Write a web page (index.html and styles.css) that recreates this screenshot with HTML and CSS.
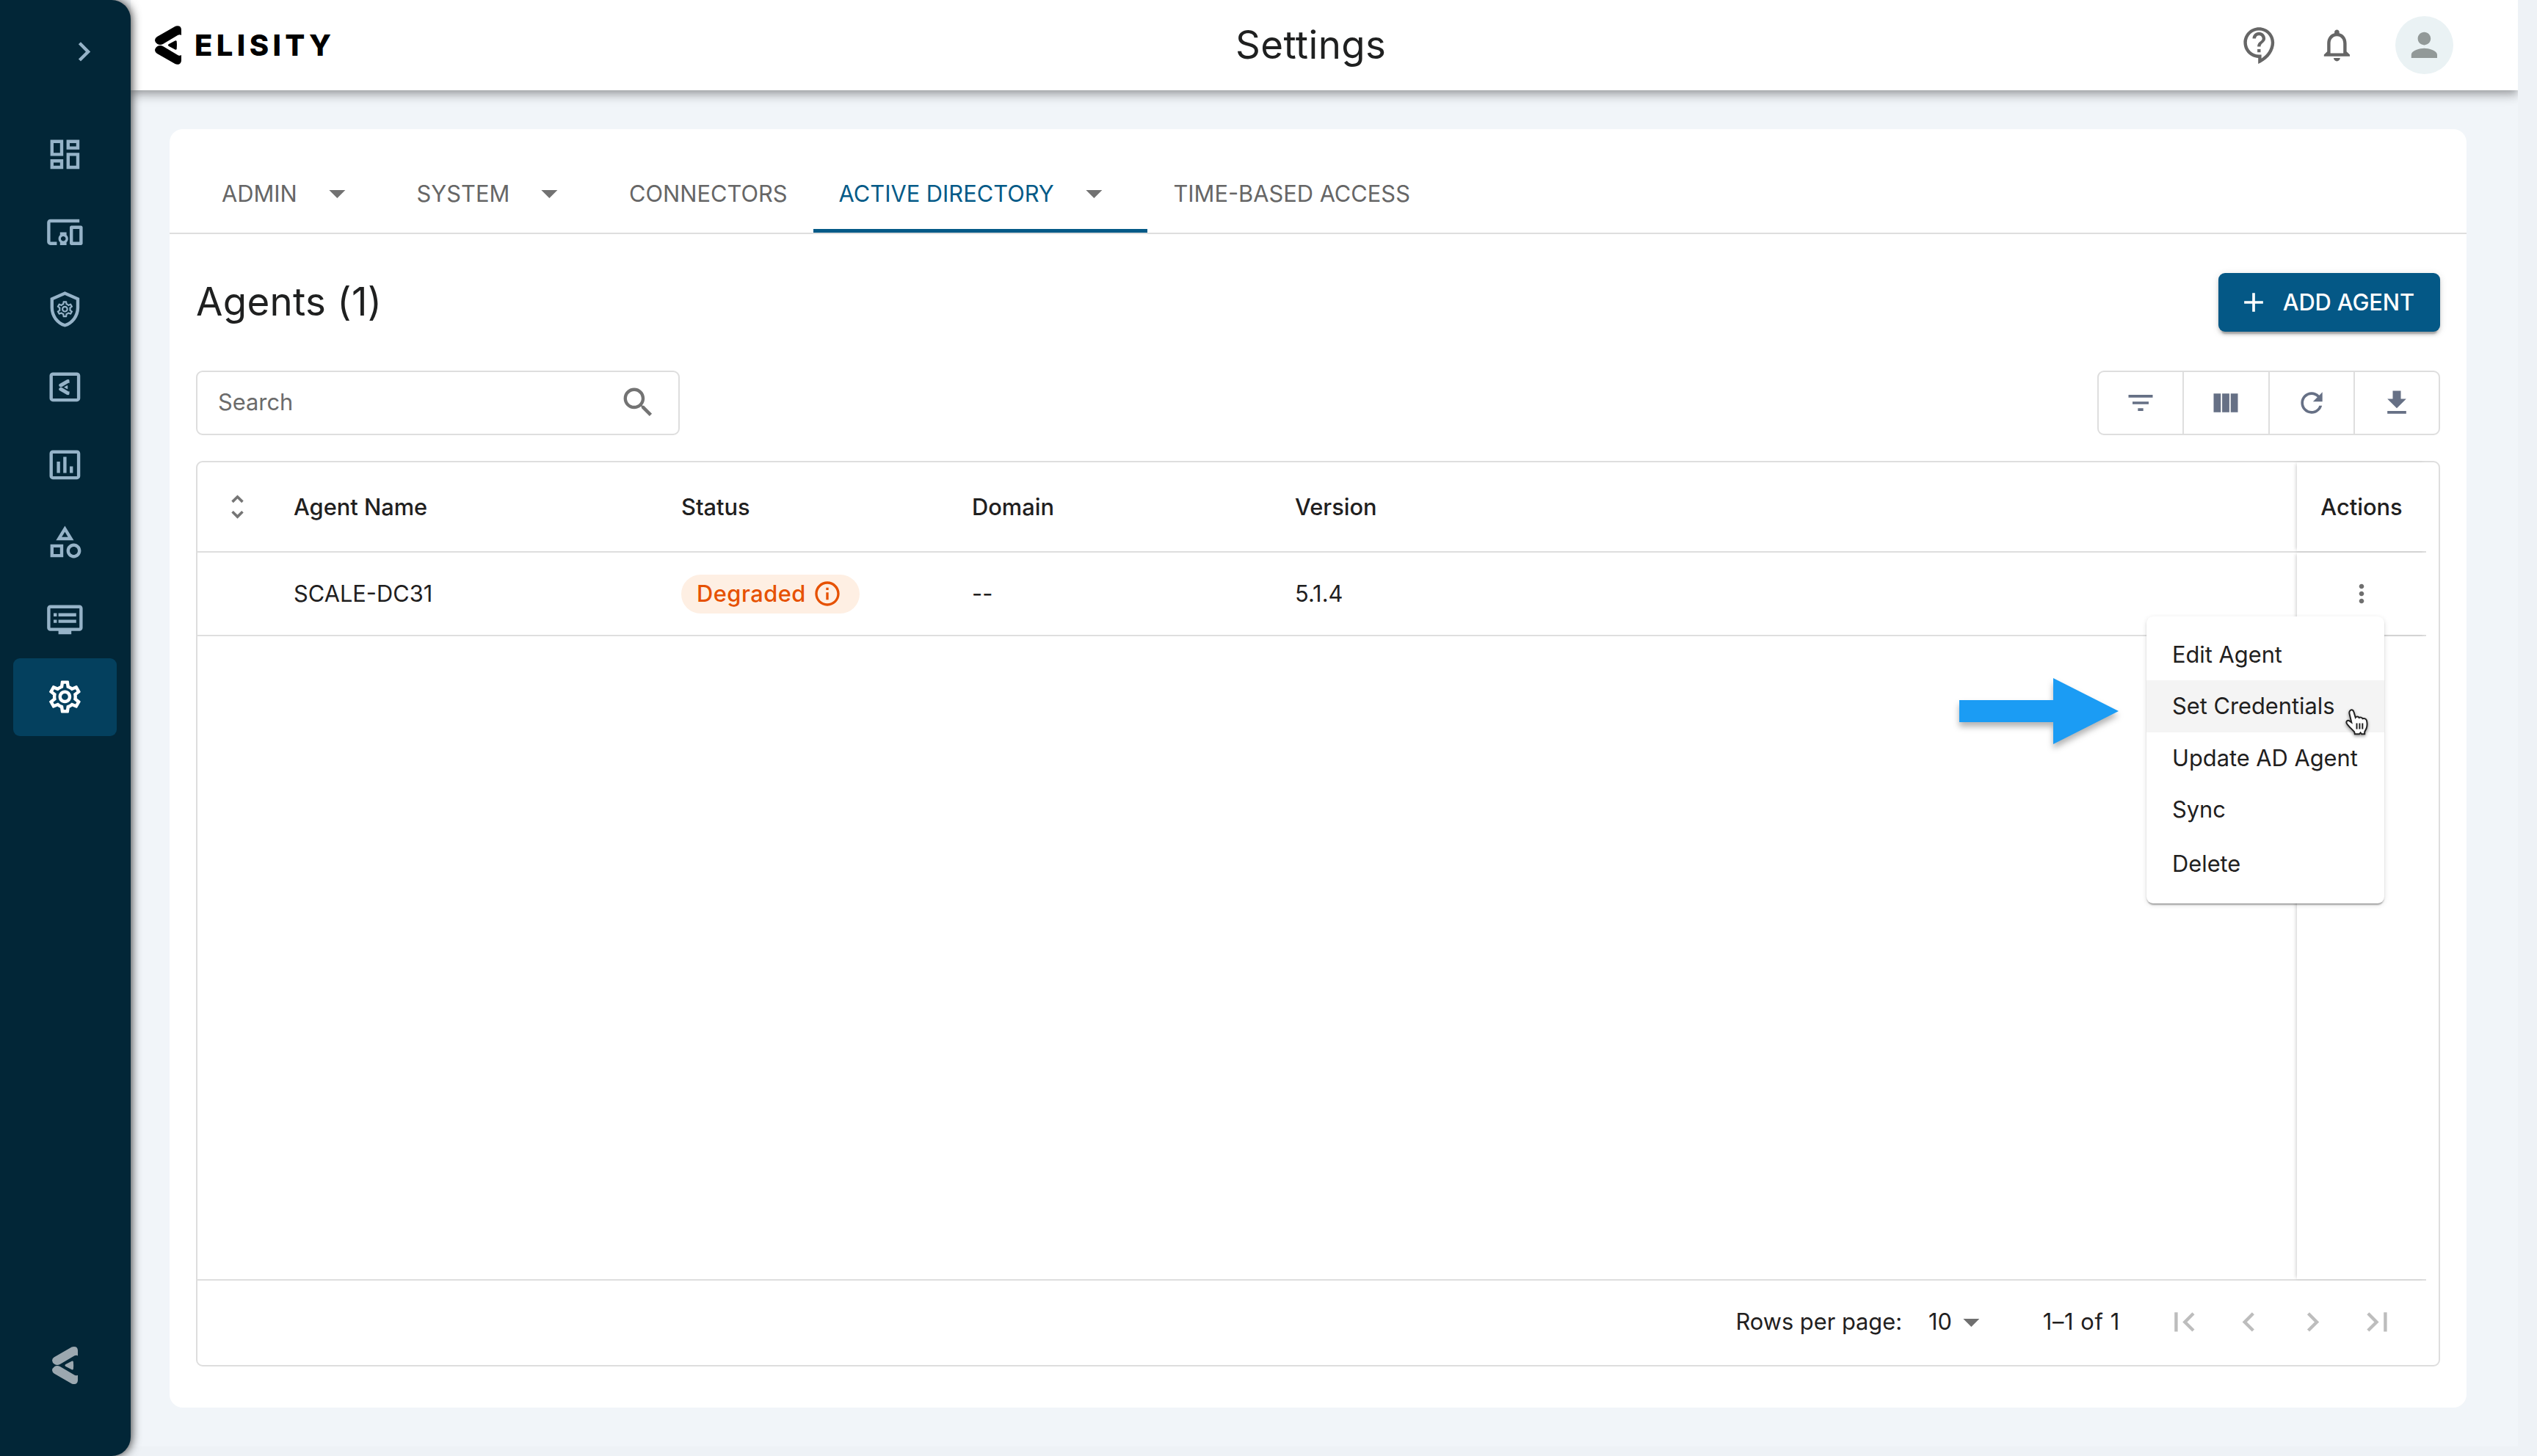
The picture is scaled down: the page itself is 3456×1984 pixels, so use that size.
FILE: index.html
```html
<!DOCTYPE html>
<html lang="en">
	<head>
		<meta charset="utf-8" />
		<title>Settings</title>
		<link rel="stylesheet" href="styles.css">
	</head>
	<body>
		<svg class="defs" width="0" height="0">
			<symbol id="mark" viewBox="0 0 36 53">
				<path d="M27.5.9Q30-.3 33 .6 36 2 36 6v7q-1.6-1.4-4.5-.2L11 25q-4 2-7.5 0Q0 22.5 0 19.500.3 16.500 3 15z" />
				<path d="M27.500 52.100q2.500 1.200 5.500.3 3-1.400 3-5.400v-7q-1.600 1.400-4.500.2L11 28q-4-2-7.500 0Q0 30.500 0 33.500.3 36.500 3 38z" />
				<path d="M18.600 25.300 27.500 20.500q1.700-.6 2.200.8.600 5.200 0 10.400-.5 1.400-2.200.8l-8.900-4.800q-1.500-1.200 0-2.400z" />
			</symbol>
			<symbol id="gear" viewBox="0 0 24 24">
				<path d="M19.430 12.980c.04-.32.07-.64.07-.98s-.03-.66-.07-.98l2.110-1.650c.19-.15.24-.42.12-.64l-2-3.460c-.09-.16-.26-.25-.44-.25-.06 0-.12.01-.17.03l-2.490 1c-.52-.4-1.080-.73-1.690-.98l-.38-2.650C14.460 2.180 14.250 2 14 2h-4c-.25 0-.46.18-.49.42l-.38 2.650c-.61.25-1.170.59-1.690.98l-2.490-1c-.06-.02-.12-.03-.18-.03-.17 0-.34.09-.43.25l-2 3.460c-.13.22-.07.49.12.64l2.110 1.650c-.04.32-.07.65-.07.98s.03.66.07.98l-2.110 1.650c-.19.15-.24.42-.12.64l2 3.460c.09.16.26.25.44.25.06 0 .12-.01.17-.03l2.490-1c.52.4 1.080.73 1.690.98l.38 2.650c.03.24.24.42.49.42h4c.25 0 .46-.18.49-.42l.38-2.650c.61-.25 1.170-.59 1.690-.98l2.490 1c.06.02.12.03.18.03.17 0 .34-.09.43-.25l2-3.460c.12-.22.07-.49-.12-.64l-2.110-1.650zm-1.980-1.710c.04.31.05.52.05.73s-.02.43-.05.73l-.14 1.130.89.7 1.080.84-.7 1.210-1.270-.51-1.040-.42-.9.68c-.43.32-.84.56-1.250.73l-1.060.43-.16 1.130-.2 1.350h-1.400l-.19-1.350-.16-1.130-1.060-.43c-.43-.18-.83-.41-1.230-.71l-.91-.7-1.060.43-1.270.51-.7-1.210 1.080-.84.89-.7-.14-1.130c-.03-.31-.05-.54-.05-.74s.02-.43.05-.73l.14-1.130-.89-.7-1.080-.84.7-1.210 1.270.51 1.040.42.9-.68c.43-.32.84-.56 1.250-.73l1.060-.43.16-1.130.2-1.350h1.390l.19 1.350.16 1.130 1.060.43c.43.18.83.41 1.230.71l.91.7 1.060-.43 1.270-.51.7 1.210-1.070.85-.89.7.14 1.130zM12 8c-2.210 0-4 1.790-4 4s1.790 4 4 4 4-1.790 4-4-1.790-4-4-4zm0 6c-1.100 0-2-.9-2-2s.9-2 2-2 2 .9 2 2-.9 2-2 2z" />
			</symbol>
			<symbol id="caret" viewBox="0 0 24 24"><path d="m7 10 5 5 5-5z" /></symbol>
		</svg>

		<nav class="sidebar">
			<div class="sidebar-toggle">
				<svg class="icon" viewBox="0 0 24 24"><path d="M10 6 8.590 7.410 13.170 12l-4.580 4.590L10 18l6-6z" /></svg>
			</div>
			<ul class="nav">
				<li><svg class="icon" viewBox="0 0 24 24"><path d="M19 5v2h-4V5h4M9 5v6H5V5h4m10 8v6h-4v-6h4M9 17v2H5v-2h4M21 3h-8v6h8V3zM11 3H3v10h8V3zm10 8h-8v10h8V11zm-10 4H3v6h8v-6z" /></svg></li>
				<li><svg class="icon" viewBox="0 0 24 24"><path d="M3 6h18V4H3c-1.100 0-2 .9-2 2v12c0 1.100.9 2 2 2h4v-2H3V6zm10 6H9v1.780c-.61.55-1 1.330-1 2.220s.39 1.670 1 2.220V20h4v-1.780c.61-.55 1-1.340 1-2.220s-.39-1.670-1-2.220V12zm-2 5.500c-.83 0-1.500-.67-1.500-1.500s.67-1.500 1.500-1.500 1.500.67 1.500 1.500-.67 1.500-1.500 1.500zM22 8h-6c-.5 0-1 .5-1 1v10c0 .5.5 1 1 1h6c.5 0 1-.5 1-1V9c0-.5-.5-1-1-1zm-1 10h-4v-8h4v8z" /></svg></li>
				<li><svg class="icon" viewBox="0 0 24 24">
					<path d="M12 1 3 5v6c0 5.550 3.840 10.740 9 12 5.160-1.260 9-6.450 9-12V5l-9-4zm7 10c0 4.520-2.980 8.690-7 9.930-4.020-1.240-7-5.410-7-9.930V6.300l7-3.110 7 3.110V11z" />
					<use href="#gear" x="6" y="5.900" width="12" height="12" />
				</svg></li>
				<li><svg class="icon" viewBox="0 0 24 24">
					<path d="M19.500 3h-15c-1.100 0-2 .9-2 2v14c0 1.100.9 2 2 2h15c1.100 0 2-.9 2-2V5c0-1.100-.9-2-2-2zm0 16.100h-15V5h15v14.100z" />
					<use href="#mark" x="8.200" y="7.200" width="6.700" height="9.800" />
				</svg></li>
				<li><svg class="icon" viewBox="0 0 24 24"><path d="M9 17H7v-7h2v7zm4 0h-2V7h2v10zm4 0h-2v-4h2v4zm2.500 2.100h-15V5h15v14.100zm0-16.100h-15c-1.100 0-2 .9-2 2v14c0 1.100.9 2 2 2h15c1.100 0 2-.9 2-2V5c0-1.100-.9-2-2-2z" /></svg></li>
				<li><svg class="icon" viewBox="0 0 24 24"><path d="m12 2-5.500 9h11L12 2zm0 3.840L13.930 9h-3.870L12 5.840zM17.500 13c-2.490 0-4.500 2.010-4.500 4.500s2.010 4.500 4.500 4.500 4.500-2.010 4.500-4.500-2.010-4.500-4.500-4.500zm0 7c-1.380 0-2.500-1.120-2.500-2.500s1.120-2.500 2.500-2.500 2.500 1.120 2.500 2.500-1.120 2.500-2.500 2.500zM3 21.500h8v-8H3v8zm2-6h4v4H5v-4z" /></svg></li>
				<li><svg class="icon" viewBox="0 0 24 24"><path d="M21 3H3c-1.100 0-2 .9-2 2v12c0 1.100.9 2 2 2h5v2h8v-2h5c1.100 0 1.990-.9 1.990-2L23 5c0-1.100-.9-2-2-2zm0 14H3V5h18v12zm-2-9H8v2h11V8zm0 4H8v2h11v-2zM7 8H5v2h2V8zm0 4H5v2h2v-2z" /></svg></li>
				<li class="active"><svg class="icon"><use href="#gear" /></svg></li>
			</ul>
			<svg class="sidebar-mark"><use href="#mark" /></svg>
		</nav>

		<div class="main">
			<header class="header">
				<div class="brand">
					<svg class="brand-mark"><use href="#mark" /></svg>
					<span>ELISITY</span>
				</div>
				<h1>Settings</h1>
				<div class="header-tools">
					<svg class="icon" viewBox="0 0 24 24"><path d="M11 23.590v-3.600c-5.010-.26-9-4.420-9-9.490C2 5.260 6.260 1 11.500 1S21 5.260 21 10.500c0 4.950-3.440 9.930-8.570 12.400l-1.430.69zM11.500 3C7.360 3 4 6.360 4 10.500S7.360 18 11.500 18H13v2.300c3.640-2.300 6-6.080 6-9.800C19 6.360 15.640 3 11.500 3zm-1 11.500h2v2h-2v-2zm2-1.500h-2c0-3.250 3-3 3-5 0-1.100-.9-2-2-2s-2 .9-2 2h-2c0-2.210 1.790-4 4-4s4 1.790 4 4c0 2.500-3 2.750-3 5z" /></svg>
					<svg class="icon" viewBox="0 0 24 24"><path d="M12 22c1.100 0 2-.9 2-2h-4c0 1.100.9 2 2 2zm6-6v-5c0-3.070-1.630-5.640-4.500-6.320V4c0-.83-.67-1.500-1.500-1.500s-1.500.67-1.500 1.500v.68C7.640 5.360 6 7.920 6 11v5l-2 2v1h16v-1l-2-2zm-2 1H8v-6c0-2.480 1.510-4.500 4-4.500s4 2.020 4 4.500v6z" /></svg>
					<div class="avatar">
						<svg class="icon" viewBox="0 0 24 24"><path d="M12 12c2.210 0 4-1.790 4-4s-1.790-4-4-4-4 1.790-4 4 1.790 4 4 4zm0 2c-2.670 0-8 1.340-8 4v2h16v-2c0-2.660-5.330-4-8-4z" /></svg>
					</div>
				</div>
			</header>

			<main class="content">
				<section class="card">
					<div class="tabs">
						<div class="tab">ADMIN <svg class="icon"><use href="#caret" /></svg></div>
						<div class="tab">SYSTEM <svg class="icon"><use href="#caret" /></svg></div>
						<div class="tab">CONNECTORS</div>
						<div class="tab selected">ACTIVE DIRECTORY <svg class="icon"><use href="#caret" /></svg></div>
						<div class="tab">TIME-BASED ACCESS</div>
					</div>

					<div class="title-row">
						<h2>Agents (1)</h2>
						<button class="add">
							<svg viewBox="0 0 24 24"><path d="M19 13h-6v6h-2v-6H5v-2h6V5h2v6h6v2z" /></svg>
							ADD AGENT
						</button>
					</div>

					<div class="filter-row">
						<div class="search">
							<span>Search</span>
							<svg class="icon" viewBox="0 0 24 24"><path d="M15.500 14h-.79l-.28-.27C15.410 12.590 16 11.110 16 9.500 16 5.910 13.090 3 9.500 3S3 5.910 3 9.500 5.910 16 9.500 16c1.610 0 3.090-.59 4.230-1.570l.27.28v.79l5 4.990L20.490 19l-4.990-5zm-6 0C7.010 14 5 11.990 5 9.500S7.010 5 9.500 5 14 7.010 14 9.500 11.990 14 9.500 14z" /></svg>
						</div>
						<div class="toolbar">
							<div><svg viewBox="0 0 24 24"><path d="M10 18h4v-2h-4v2zM3 6v2h18V6H3zm3 7h12v-2H6v2z" /></svg></div>
							<div><svg viewBox="0 0 24 24"><path d="M14.670 5v14H9.330V5h5.340zm1 14H21V5h-5.330v14zm-7.340 0V5H3v14h5.330z" /></svg></div>
							<div><svg viewBox="0 0 24 24"><path d="M17.650 6.350C16.200 4.900 14.210 4 12 4c-4.420 0-7.990 3.580-7.990 8s3.570 8 7.990 8c3.730 0 6.840-2.550 7.730-6h-2.080c-.82 2.330-3.040 4-5.650 4-3.310 0-6-2.690-6-6s2.690-6 6-6c1.660 0 3.140.69 4.220 1.780L13 11h7V4l-2.350 2.350z" /></svg></div>
							<div><svg viewBox="0 0 24 24"><path d="M19 9h-4V3H9v6H5l7 7 7-7zM5 18v2h14v-2H5z" /></svg></div>
						</div>
					</div>

					<div class="grid">
						<div class="grid-body">
							<div class="row head">
								<div class="sort"><svg viewBox="0 0 24 24"><path d="M12 5.830 15.170 9l1.410-1.410L12 3 7.410 7.590 8.830 9 12 5.830zm0 12.340L8.830 15l-1.410 1.410L12 21l4.590-4.590L15.170 15 12 18.170z" /></svg></div>
								<div>Agent Name</div>
								<div>Status</div>
								<div>Domain</div>
								<div>Version</div>
								<div class="actions">Actions</div>
							</div>
							<div class="row">
								<div></div>
								<div>SCALE-DC31</div>
								<div>
									<span class="chip">Degraded
										<svg viewBox="0 0 24 24"><path d="M11 7h2v2h-2zm0 4h2v6h-2zm1-9C6.480 2 2 6.480 2 12s4.480 10 10 10 10-4.480 10-10S17.520 2 12 2zm0 18c-4.410 0-8-3.590-8-8s3.590-8 8-8 8 3.590 8 8-3.590 8-8 8z" /></svg>
									</span>
								</div>
								<div>--</div>
								<div>5.1.4</div>
								<div class="actions">
									<svg class="dots" viewBox="0 0 24 24"><path d="M12 8c1.100 0 2-.9 2-2s-.9-2-2-2-2 .9-2 2 .9 2 2 2zm0 2c-1.100 0-2 .9-2 2s.9 2 2 2 2-.9 2-2-.9-2-2-2zm0 6c-1.100 0-2 .9-2 2s.9 2 2 2 2-.9 2-2-.9-2-2-2z" /></svg>
									<ul class="menu">
										<li>Edit Agent</li>
										<li class="hover">Set Credentials</li>
										<li>Update AD Agent</li>
										<li>Sync</li>
										<li>Delete</li>
									</ul>
									<svg class="arrow" viewBox="0 0 217 90"><path d="M0 30h128V0l89 45-89 45V60H0z" /></svg>
									<svg class="cursor" viewBox="0 0 32 37">
										<path d="M6.500 3.200C8.500 1.500 10.800 2.500 11.400 5l2.300 7.600c1-1.500 4-1.500 5 .4 1.500-1 4-.5 4.800 1.300 2.200-.8 4.800.3 5.500 2.700.9 3.600.7 7.500-.5 10.800l-2.300 4.400v3.100h-4.200l-1.400-2-1.600 2h-6.200l-.6-2.900C9 28.500 4.500 25 1.800 20.700c-1.200-2.400.6-4.500 3-3.700L8.300 19.500 5.600 8C5.100 6 5.300 4.200 6.500 3.200z" />
										<path d="M15.500 20.500v8M19.400 20.500v8M23.300 20.500v8" />
									</svg>
								</div>
							</div>
							<div class="row empty">
								<div class="actions"></div>
							</div>
						</div>

						<footer class="pager">
							<span>Rows per page:</span>
							<span class="size">10</span>
							<svg class="size-caret"><use href="#caret" /></svg>
							<span class="range">1–1 of 1</span>
							<div class="pages">
								<svg class="icon" viewBox="0 0 24 24"><path d="M18.410 16.590 13.820 12l4.590-4.590L17 6l-6 6 6 6zM6 6h2v12H6z" /></svg>
								<svg class="icon" viewBox="0 0 24 24"><path d="M15.410 7.410 14 6l-6 6 6 6 1.410-1.410L10.830 12z" /></svg>
								<svg class="icon" viewBox="0 0 24 24"><path d="M10 6 8.590 7.410 13.170 12l-4.580 4.590L10 18l6-6z" /></svg>
								<svg class="icon" viewBox="0 0 24 24"><path d="M5.590 7.410 10.180 12l-4.590 4.590L7 18l6-6-6-6zM16 6h2v12h-2z" /></svg>
							</div>
						</footer>
					</div>
				</section>
			</main>
		</div>
	</body>
</html>
```

FILE: styles.css
```css
* { box-sizing: border-box; }
body {
	display: flex;
	height: 1984px;
	margin: 0;
	overflow: hidden;
	background: #eef2f6;
	color: #1f2020;
	font: 400 30.8px/44px Inter, "Liberation Sans", sans-serif;
}
h1, h2 {
	margin: 0;
	font-size: 52.8px;
	font-weight: 400;
	line-height: 70px;
}
ul {
	margin: 0;
	padding: 0;
	list-style: none;
}
svg {
	display: block;
	flex: none;
	fill: currentColor;
}
.defs { position: absolute; }
.icon {
	width: 52.8px;
	height: 52.8px;
}

/* Sidebar */
.sidebar {
	position: relative;
	z-index: 2;
	display: flex;
	flex: none;
	flex-direction: column;
	width: 178px;
	height: 1984px;
	padding: 0 18px 97px;
	border-radius: 0 26px 26px 0;
	background: #022637;
	box-shadow: 1px 0 14px rgba(0, 0, 0, 0.8);
	color: #96b3c8;
}
.sidebar-toggle {
	display: flex;
	justify-content: flex-end;
	align-items: center;
	height: 140.8px;
	margin-bottom: 17px;
	padding-right: 19px;
}
.nav li {
	display: flex;
	justify-content: center;
	align-items: center;
	width: 141px;
	height: 105.6px;
	border-radius: 9px;
}
.nav .active {
	background: #04405e;
	color: #fff;
}
.sidebar-mark {
	width: 35px;
	height: 53px;
	margin: auto 0 0 53px;
	color: #9ca8b0;
}

/* Header */
.main {
	display: flex;
	flex: 1;
	flex-direction: column;
	height: 1971px;
	margin-right: 26px;
	overflow: hidden;
	background: #f1f5f9;
}
.header {
	position: relative;
	z-index: 1;
	display: flex;
	flex: none;
	align-items: center;
	height: 123px;
	padding: 0 88px 0 33px;
	background: #fff;
	box-shadow: 0 4px 9px -2px rgba(0, 0, 0, 0.2), 0 9px 11px rgba(0, 0, 0, 0.14), 0 2px 22px rgba(0, 0, 0, 0.12);
}
.brand {
	display: flex;
	align-items: center;
	gap: 18px;
	width: 1472px;
	color: #000;
	font-size: 40px;
	font-weight: 800;
	letter-spacing: 5.4px;
}
.brand-mark {
	width: 36px;
	height: 53px;
}
.header h1 {
	padding-bottom: 2px;
	letter-spacing: 0.4px;
}
.header-tools {
	display: flex;
	align-items: center;
	gap: 52.8px;
	margin-left: auto;
	color: #666;
}
.avatar {
	display: flex;
	justify-content: center;
	align-items: center;
	width: 79px;
	height: 79px;
	border-radius: 50%;
	background: #eaf2f4;
	color: #929998;
}

/* Card */
.content {
	flex: 1;
	padding: 53px 70px 53px 53px;
}
.card {
	height: 1742px;
	border-radius: 18px;
	background: #fff;
}
.tabs {
	display: flex;
	height: 143px;
	padding: 36px 36px 0;
	border-bottom: 2px solid #dedede;
	color: #666;
}
.tab {
	display: flex;
	align-items: center;
	padding: 3px 35px 0;
	border-bottom: 5px solid transparent;
}
.tab .icon {
	margin: 0 12px 0 28px;
	color: #727272;
}
.tab.selected {
	border-color: #045a87;
	color: #045a87;
}
.title-row {
	display: flex;
	justify-content: space-between;
	align-items: center;
	height: 80px;
	margin: 53px 36px 0;
}
.title-row h2 {
	padding-bottom: 2px;
	letter-spacing: 0.3px;
}
.add {
	display: flex;
	align-items: center;
	gap: 17.6px;
	height: 80px;
	padding: 0 35px 0 26px;
	border: 0;
	border-radius: 9px;
	background: #045886;
	box-shadow: 0 7px 2px -4px rgba(0, 0, 0, 0.2), 0 4px 4px rgba(0, 0, 0, 0.14), 0 2px 11px rgba(0, 0, 0, 0.12);
	color: #fff;
	font: inherit;
	font-weight: 500;
	letter-spacing: -0.1px;
}
.add svg, .toolbar svg {
	width: 44px;
	height: 44px;
}
.filter-row {
	display: flex;
	justify-content: space-between;
	margin: 53px 36px 35px;
}
.search {
	display: flex;
	justify-content: space-between;
	align-items: center;
	width: 659px;
	height: 88px;
	padding: 0 28px 2px;
	border: 2px solid #dedede;
	border-radius: 9px;
	color: #6b6b6b;
}
.search .icon { color: #737373; }
.toolbar {
	display: flex;
	width: 467px;
	height: 88px;
	border: 2px solid #dedede;
	border-radius: 9px;
	color: #667085;
}
.toolbar div {
	display: flex;
	flex: 1;
	justify-content: center;
	align-items: center;
}
.toolbar div + div { border-left: 2px solid #dedede; }

/* Data grid */
.grid {
	display: flex;
	flex-direction: column;
	height: 1234px;
	margin: 0 36px;
	border: 2px solid #dedede;
	border-radius: 9px;
}
.grid-body {
	display: flex;
	flex: 1;
	flex-direction: column;
	margin-right: 17px;
}
.row {
	display: grid;
	grid-template-columns: 113px 528px 396px 440px 1fr 176px;
	height: 114px;
	border-bottom: 2px solid #dedede;
}
.row > div {
	display: flex;
	align-items: center;
	padding-left: 18px;
}
.head {
	height: 123px;
	font-weight: 500;
}
.row .actions {
	position: relative;
	justify-content: center;
	padding: 0;
	box-shadow: -3px 0 5px -2px rgba(0, 0, 0, 0.2);
}
.empty {
	flex: 1;
	grid-template-columns: 1fr 176px;
}
.empty .actions { grid-column: 2; }
.row .sort { padding-left: 33px; }
.sort svg {
	width: 43px;
	height: 43px;
	color: #757575;
}
.chip {
	display: flex;
	align-items: center;
	gap: 9px;
	height: 53px;
	padding: 0 24px 0 21px;
	border-radius: 27px;
	background: #feefe3;
	color: #e65100;
	font-weight: 500;
	letter-spacing: 0.5px;
}
.chip svg, .dots {
	width: 40px;
	height: 40px;
}
.dots { color: #6f6f6f; }

/* Row menu */
.menu {
	position: absolute;
	top: 87px;
	right: 57px;
	z-index: 1;
	width: 324px;
	height: 391px;
	padding: 17px 0;
	border-radius: 9px;
	background: #fff;
	box-shadow: 0 4px 2px -2px rgba(0, 0, 0, 0.2), 0 2px 2px rgba(0, 0, 0, 0.14), 0 2px 7px rgba(0, 0, 0, 0.12);
}
.menu li {
	height: 70.4px;
	padding: 13px 35px;
	white-space: nowrap;
}
.menu li:last-child { margin-top: 3px; }
.menu .hover { background: #f4f4f4; }
.arrow {
	position: absolute;
	top: 171px;
	right: 419px;
	z-index: 1;
	width: 217px;
	height: 90px;
	color: #1b9cf4;
	filter: drop-shadow(0 6px 4px rgba(0, 0, 0, 0.3));
}
.cursor {
	position: absolute;
	top: 212px;
	right: 78px;
	z-index: 2;
	width: 32px;
	height: 37px;
	fill: #fff;
	stroke: #222;
	stroke-width: 2;
	filter: drop-shadow(0 2px 2px rgba(0, 0, 0, 0.4));
}

/* Pagination */
.pager {
	display: flex;
	align-items: center;
	justify-content: flex-end;
	height: 115px;
	padding: 0 57px 3px 0;
}
.size { margin-left: 36px; }
.size-caret {
	width: 52.8px;
	height: 52.8px;
	color: #6f6f6f;
}
.range {
	margin-left: 71px;
	letter-spacing: 0.6px;
}
.pages {
	display: flex;
	gap: 35px;
	margin-left: 61px;
	color: #bdbdbd;
}
```
